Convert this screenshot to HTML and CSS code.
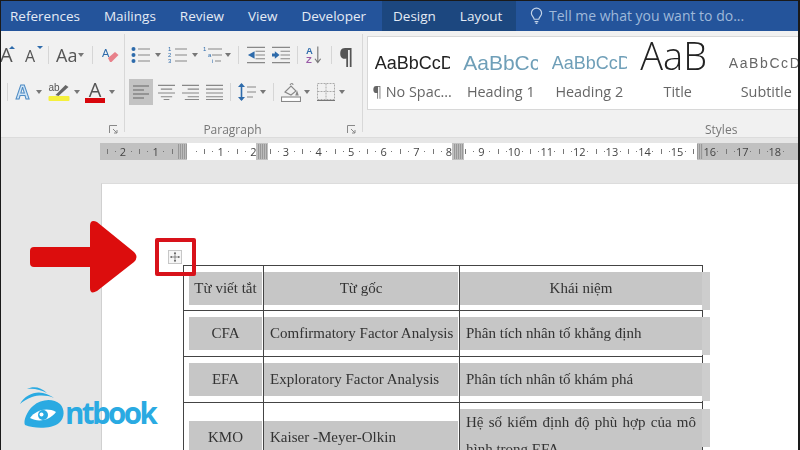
FILE: index.html
```html
<!DOCTYPE html>
<html lang="vi">
<head>
  <meta charset="UTF-8">
  <title>Word table</title>
  <link rel="stylesheet" href="styles.css">
</head>
<body>

  <nav class="tabs">
    <span class="tab">References</span>
    <span class="tab">Mailings</span>
    <span class="tab">Review</span>
    <span class="tab">View</span>
    <span class="tab">Developer</span>
    <div class="context-tabs">
      <span class="tab">Design</span>
      <span class="tab">Layout</span>
    </div>
    <div class="tell-me">
      <svg width="13" height="18" viewBox="0 0 14 18" fill="none" stroke="#c3d3e8" stroke-width="1.3"><path d="M4.500 12.500C4 10 1.500 9 1.500 6a5.500 5.500 0 0 1 11 0c0 3-2.500 4-3 6.500zM5 15h4M6 17h2"/></svg>
      <span>Tell me what you want to do...</span>
    </div>
  </nav>

  <section class="ribbon">
    <div class="group font-group">
      <div class="tool-row row-top">
        <span class="big-a cut">A<i class="up"></i></span>
        <span class="big-a small">A<i class="down"></i></span>
        <span class="sep f-sep1"></span>
        <span class="case">Aa</span><span class="caret f-caret1"></span>
        <span class="sep f-sep2"></span>
        <svg width="17" height="16" viewBox="0 0 17 16"><text x="0" y="10" font-size="11" fill="#2e6bab" font-family="Liberation Sans">A</text><path d="M6 11l7-6 3.500 3-7 7H8z" fill="#e8808a"/></svg>
      </div>
      <div class="tool-row row-bottom">
        <span class="sep f-sep3"></span>
        <span class="glow-a">A</span><span class="caret"></span>
        <div class="marker">
          <svg width="22" height="20" viewBox="0 0 21 20"><text x="0" y="9" font-size="10" fill="#555" font-family="Liberation Sans">ab</text><path d="M7 13l10-10 3 2-10 9z" fill="#666"/><rect y="14" width="21" height="5" rx="1" fill="#f5f03c"/></svg>
        </div>
        <span class="caret f-caret2"></span>
        <div class="font-color">A<i></i></div>
        <span class="caret f-caret2"></span>
      </div>
      <footer class="group-foot"><svg class="launcher" width="9" height="9" viewBox="0 0 9 9" fill="none" stroke="#888"><path d="M.5 8V.5H8M4 4l4 4M8 5v3H5"/></svg></footer>
    </div>

    <div class="group para-group">
      <div class="tool-row row-top">
        <svg width="19" height="18" viewBox="0 0 19 18" stroke="#888" stroke-width="1.2"><circle cx="2.500" cy="3" r="2" fill="#2e6bab" stroke="none"/><circle cx="2.500" cy="9" r="2" fill="#2e6bab" stroke="none"/><circle cx="2.500" cy="15" r="2" fill="#2e6bab" stroke="none"/><path d="M7 3h12M7 9h12M7 15h12"/></svg>
        <span class="caret p-caret1"></span>
        <svg width="19" height="18" viewBox="0 0 19 18" stroke="#888" stroke-width="1.2"><path d="M7 3h12M7 9h12M7 15h12"/><g fill="#2e6bab" stroke="none" font-size="6" font-family="Liberation Sans"><text x="0" y="5">1</text><text x="0" y="11">2</text><text x="0" y="17">3</text></g></svg>
        <span class="caret p-caret2"></span>
        <svg width="19" height="18" viewBox="0 0 19 18" stroke="#888" stroke-width="1.2"><path d="M5 3h14M9 9h10M12 15h6"/><g fill="#2e6bab" stroke="none" font-size="6" font-family="Liberation Sans"><text x="0" y="5">1</text><text x="5" y="11">a</text><text x="9" y="17">i</text></g></svg>
        <span class="caret p-caret3"></span>
        <span class="sep p-sep1"></span>
        <svg width="18" height="18" viewBox="0 0 19 18" stroke="#888" stroke-width="1.2"><path d="M0 1h19M9 5h10M9 9h10M9 13h10M0 17h19"/><path d="M8 5v8L1 9z" fill="#2e6bab" stroke="none"/></svg>
        <svg class="p-indent" width="18" height="18" viewBox="0 0 19 18" stroke="#888" stroke-width="1.2"><path d="M0 1h19M9 5h10M9 9h10M9 13h10M0 17h19"/><path d="M0 7.500h3V5l5 4-5 4v-2.500H0z" fill="#2e6bab" stroke="none"/></svg>
        <span class="sep p-sep2"></span>
        <svg width="17" height="20" viewBox="0 0 18 20"><text x="0" y="9" font-size="10" font-weight="bold" fill="#2e6bab" font-family="Liberation Sans">A</text><text x="0" y="19" font-size="10" font-weight="bold" fill="#9a5ba8" font-family="Liberation Sans">Z</text><path d="M12.500 1v17M9.500 14l3 4 3-4" fill="none" stroke="#777" stroke-width="1.2"/></svg>
        <span class="sep p-sep3"></span>
        <span class="pilcrow">¶</span>
      </div>
      <div class="tool-row row-bottom">
        <span class="align-on">
          <svg width="16" height="16" viewBox="0 0 16 16" stroke="#666" stroke-width="1.200"><path d="M0 2h16M0 6h11M0 10h16M0 14h11"/></svg>
        </span>
        <svg class="p-center" width="17" height="18" viewBox="0 0 18 18" stroke="#888" stroke-width="1.200"><path d="M0 2h18M3 6h12M0 10h18M3 14h12M6 17h6"/></svg>
        <svg class="p-align" width="17" height="18" viewBox="0 0 18 18" stroke="#888" stroke-width="1.200"><path d="M0 2h18M6 6h12M0 10h18M6 14h12M3 17h15"/></svg>
        <svg class="p-align" width="17" height="18" viewBox="0 0 18 18" stroke="#888" stroke-width="1.200"><path d="M0 2h18M0 6h18M0 10h18M0 14h18M0 17h18"/></svg>
        <span class="sep p-sep4"></span>
        <svg width="18" height="20" viewBox="0 0 18 20"><path d="M3.500 2v16" stroke="#2e6bab" stroke-width="1.600"/><path d="M0 5l3.500-4L7 5zM0 15l3.500 4L7 15z" fill="#2e6bab"/><path d="M9 5h9M9 10h9M9 15h6" stroke="#888" stroke-width="1.200"/></svg>
        <span class="caret p-caret4"></span>
        <span class="sep p-sep5"></span>
        <svg width="20" height="20" viewBox="0 0 20 20" fill="none" stroke="#888" stroke-width="1.100"><path d="M4 10l6-6 5 5-5 4z"/><path d="M9 3c1-2 3-2 3 0"/><path d="M16 10l1 3-2 0z" fill="#888"/><rect x=".5" y="15" width="19" height="4.500" fill="#fff"/></svg>
        <span class="caret p-caret5"></span>
        <svg class="p-borders" width="18" height="18" viewBox="0 0 18 18" fill="none" stroke="#aaa" stroke-dasharray="2 1"><path d="M.5.500h17v16H.5zM9 .5v16M.5 8.500h17"/><path d="M0 17.500h18" stroke="#777" stroke-dasharray="none"/></svg>
        <span class="caret p-caret4"></span>
      </div>
      <footer class="group-foot">
        <span class="group-name para-name">Paragraph</span>
        <svg class="launcher" width="9" height="9" viewBox="0 0 9 9" fill="none" stroke="#888"><path d="M.5 8V.5H8M4 4l4 4M8 5v3H5"/></svg>
      </footer>
    </div>

    <div class="group styles-group">
      <div class="gallery">
        <div class="style-item">
          <span class="sample nospace">AaBbCcD</span>
          <span class="style-name">¶ No Spac...</span>
        </div>
        <div class="style-item">
          <span class="sample h1">AaBbCcD</span>
          <span class="style-name">Heading 1</span>
        </div>
        <div class="style-item">
          <span class="sample h2">AaBbCcD</span>
          <span class="style-name">Heading 2</span>
        </div>
        <div class="style-item">
          <span class="sample title">AaB</span>
          <span class="style-name">Title</span>
        </div>
        <div class="style-item">
          <span class="sample subtitle">AaBbCcD</span>
          <span class="style-name">Subtitle</span>
        </div>
      </div>
      <footer class="group-foot"><span class="group-name styles-name">Styles</span></footer>
    </div>
  </section>

  <div class="ruler-bar">
    <div class="ruler">
      <span class="unit">2</span><span class="unit">1</span><span class="unit"></span><span class="unit">1</span><span class="unit">2</span><span class="unit">3</span><span class="unit">4</span><span class="unit">5</span><span class="unit">6</span><span class="unit">7</span><span class="unit">8</span><span class="unit">9</span><span class="unit">10</span><span class="unit">11</span><span class="unit">12</span><span class="unit">13</span><span class="unit">14</span><span class="unit">15</span><span class="unit">16</span><span class="unit">17</span><span class="unit">18</span>
      <i class="grip grip-a"></i>
      <i class="grip grip-b"></i>
      <i class="grip grip-c"></i>
      <i class="grip grip-d"></i>
    </div>
  </div>

  <main class="workspace">
    <div class="page">
      <table class="doc-table">
        <tr class="r-head">
          <td class="c1"><span class="shade center first">Từ viết tắt</span></td>
          <td class="c2"><span class="shade center">Từ gốc</span></td>
          <td class="c3"><span class="shade center">Khái niệm</span></td>
        </tr>
        <tr class="r-body">
          <td><span class="shade center first">CFA</span></td>
          <td><span class="shade">Comfirmatory Factor Analysis</span></td>
          <td><span class="shade">Phân tích nhân tố khẳng định</span></td>
        </tr>
        <tr class="r-body">
          <td><span class="shade center first">EFA</span></td>
          <td><span class="shade">Exploratory Factor Analysis</span></td>
          <td><span class="shade">Phân tích nhân tố khám phá</span></td>
        </tr>
        <tr class="r-long">
          <td><span class="shade center first">KMO</span></td>
          <td><span class="shade">Kaiser -Meyer-Olkin</span></td>
          <td><span class="shade tall">Hệ số kiểm định độ phù hợp của mô hình trong EFA</span></td>
        </tr>
      </table>
    </div>

    <svg class="arrow" width="110" height="74" viewBox="0 0 110 74"><path d="M5 27H61V6Q61-1 68 2L105 32Q110 37 105 42L68 71Q61 75 61 68V47H5Q1 47 1 43V31Q1 27 5 27z" fill="#dc0d0d"/></svg>
    <div class="move-box">
      <svg width="14" height="14" viewBox="0 0 15 15" fill="none"><rect x=".5" y=".5" width="14" height="14" fill="#f6f6f6" stroke="#c4c4c4"/><path d="M7.500 3v9M3 7.500h9" stroke="#666" stroke-width=".8"/><path d="M6.300 4l1.200-2L8.700 4zM6.300 11l1.200 2L8.700 11zM4 6.300L2 7.500 4 8.700zM11 6.300l2 1.200L11 8.700z" fill="#444"/></svg>
    </div>
    <div class="logo">
      <svg width="48" height="46" viewBox="0 0 48 46"><path d="M1 19C6 10 16 6 24 8 29 9 32 11 35 13 28 10 20 10 13 12 8 14 4 16 1 19zM8 4C14 1 22 2 28 8 22 5 15 3 8 4z" fill="#2aaae2"/><path d="M6 40C4 36 8 26 14 21 22 14 34 13 41 19 46 24 46 33 40 38 32 44 16 44 6 40z" fill="#2aaae2"/><path d="M11 33C17 25 28 22 37 27 31 35 20 38 11 33z" fill="#fff"/><circle cx="24" cy="30" r="5" fill="#2aaae2"/><circle cx="22.500" cy="29.500" r="2" fill="#fff"/></svg>
      <span>ntbook</span>
    </div>
  </main>

</body>
</html>
```

FILE: styles.css
```css
* {
  box-sizing: border-box;
}

html, body {
  margin: 0;
  height: 450px;
  overflow: hidden;
}

body {
  position: relative;
  font-family: "Open Sans", "Liberation Sans", sans-serif;
  background: #e6e6e6;
  width: 800px;
}

/* dark edge of the photo */
body::after {
  content: "";
  position: absolute;
  inset: 0;
  border: solid #1a1a1a;
  border-width: 1px 2px 0 1px;
  pointer-events: none;
}

/* tabs */
.tabs {
  display: flex;
  align-items: center;
  height: 31px;
  padding-left: 10px;
  background: #24549b;
  color: #e4ebf5;
  font-size: 13.5px;
}

.tab {
  margin-right: 24px;
}

.context-tabs {
  display: flex;
  align-items: center;
  flex: none;
  height: 100%;
  background: #1c477f;
  margin-left: -8px;
  padding: 0 0 0 11px;
  width: 134px;
}

.tell-me {
  display: flex;
  align-items: center;
  gap: 6px;
  margin-left: 14px;
  font-size: 14px;
  color: #9fb9da;
}

/* ribbon */
.ribbon {
  display: flex;
  height: 107px;
  background: #f1f1f1;
  border-bottom: 1px solid #dcdcdc;
  color: #555;
  filter: blur(.3px);
}

.group {
  position: relative;
  display: flex;
  flex-direction: column;
  flex: none;
  border-right: 1px solid #d8d8d8;
  margin: 3px 0 5px;
}

.font-group {
  width: 125px;
}

.para-group {
  width: 238px;
  padding-left: 6px;
}

.styles-group {
  flex: 1;
  min-width: 0;
  border-right: none;
  margin-top: 5px;
}

.tool-row {
  display: flex;
  align-items: center;
  height: 24px;
}

.row-top {
  margin-top: 9px;
}

.row-bottom {
  margin-top: 13px;
}

.group-foot {
  position: absolute;
  left: 0;
  right: 0;
  bottom: -6px;
  height: 16px;
  text-align: center;
}

.group-name {
  font-size: 12px;
  color: #777;
  line-height: 16px;
}

.para-name {
  display: block;
  padding-right: 22px;
}

.launcher {
  position: absolute;
  right: 6px;
  top: 3px;
}

.sep {
  width: 1px;
  height: 18px;
  background: #d6d6d6;
}

.caret {
  width: 0;
  height: 0;
  border: 3px solid transparent;
  border-top: 4px solid #777;
  border-bottom: 0;
}

/* font group */
.big-a {
  position: relative;
  display: block;
  font-size: 20px;
  line-height: 24px;
  color: #555;
}

.big-a.cut {
  width: 13px;
}

.big-a.small {
  width: 12px;
  margin-left: 12px;
  padding-top: 2px;
  font-size: 16px;
}

.big-a i {
  position: absolute;
  right: -2px;
  top: 3px;
  border: 3px solid transparent;
}

.big-a .up {
  border-bottom: 3px solid #2e6bab;
  border-top: 0;
}

.big-a .down {
  right: -6px;
  top: 4px;
  border-top: 3px solid #2e6bab;
  border-bottom: 0;
}

.f-sep1 {
  margin: 0 7px 0 11px;
}

.f-caret1 {
  margin-left: 1px;
}

.f-sep2 {
  margin: 0 9px 0 8px;
}

.f-sep3 {
  margin: 0 8px 0 7px;
}

.case {
  font-size: 18px;
}

.glow-a {
  width: 16px;
  margin-right: 4px;
  font-size: 19px;
  font-weight: 700;
  color: #cfe4f6;
  -webkit-text-stroke: 1px #4f8cc4;
}

.marker {
  height: 20px;
  margin-left: 6px;
}

.f-caret2 {
  margin-left: 4px;
}

.font-color {
  position: relative;
  width: 20px;
  height: 24px;
  margin-left: 5px;
  font-size: 20px;
  line-height: 20px;
  text-align: center;
}

.font-color i {
  position: absolute;
  left: 0;
  right: 0;
  bottom: 1px;
  height: 5px;
  background: #d8060c;
}

/* paragraph group */
.p-caret1 {
  margin: 0 7px 0 5px;
}

.p-caret2 {
  margin: 0 5px 0 5px;
}

.p-caret3 {
  margin: 0 7px 0 3px;
}

.p-caret4 {
  margin-left: 4px;
}

.p-caret5 {
  margin-left: 3px;
}

.p-sep1 {
  margin-right: 8px;
}

.p-indent {
  margin-left: 7px;
}

.p-sep2 {
  margin: 0 8px 0 7px;
}

.p-sep3 {
  margin: 0 7px 0 8px;
}

.p-sep4 {
  margin: 0 7px;
}

.p-sep5 {
  margin: 0 7px;
}

.pilcrow {
  font-size: 22px;
  font-weight: 700;
  line-height: 22px;
  color: #555;
}

.align-on {
  display: flex;
  align-items: center;
  justify-content: center;
  width: 24px;
  height: 26px;
  margin-left: -2px;
  background: #c3c3c3;
}

.p-center {
  margin-left: 5px;
}

.p-align {
  margin-left: 7px;
}

.p-borders {
  margin-left: 7px;
}

/* styles gallery */
.gallery {
  display: flex;
  height: 74px;
  margin-left: 4px;
  background: #fff;
  border: 1px solid #d8d8d8;
  border-right: none;
  overflow: hidden;
}

.style-item {
  display: flex;
  flex-direction: column;
  align-items: center;
  overflow: hidden;
  flex: none;
  width: 88.500px;
}

.sample {
  display: block;
  flex: none;
  width: 75px;
  height: 46px;
  padding-top: 3px;
  line-height: 46px;
  white-space: nowrap;
  font-family: "Liberation Sans", sans-serif;
  overflow: hidden;
}

.nospace {
  font-size: 18px;
  color: #222;
}

.h1 {
  font-size: 21px;
  color: #6f9fb8;
}

.h2 {
  font-size: 18px;
  color: #6f9fb8;
}

.title {
  padding-top: 0;
  font-family: "Open Sans", sans-serif;
  font-size: 38px;
  font-weight: 300;
  line-height: 36px;
  color: #222;
}

.subtitle {
  font-size: 14px;
  letter-spacing: 1.600px;
  color: #666;
}

.style-name {
  font-size: 14.400px;
  color: #666;
  line-height: 18px;
  white-space: nowrap;
}

.styles-name {
  position: absolute;
  left: 342px;
  top: 0;
}

/* ruler */
.ruler-bar {
  height: 32px;
  padding-top: 5px;
}

.ruler {
  position: relative;
  display: flex;
  height: 17px;
  margin-left: 100px;
  padding-left: 6.700px;
  font-size: 11px;
  line-height: 17px;
  color: #444;
  white-space: nowrap;
  overflow: hidden;
  background: linear-gradient(to right,
    #c1c1c1 87px, #fff 87px, #fff 156px,
    #c1c1c1 156px, #c1c1c1 168px, #fff 168px, #fff 352px,
    #c1c1c1 352px, #c1c1c1 364px, #fff 364px, #fff 597px,
    #c1c1c1 597px);
  filter: blur(.3px);
}

.unit {
  flex: none;
  width: 32.600px;
  text-align: center;
  background-image:
    linear-gradient(#777, #777),
    linear-gradient(#777, #777),
    linear-gradient(#777, #777);
  background-size: 1px 5px, 1px 1px, 1px 1px;
  background-position: 0 center, 8px center, 24px center;
  background-repeat: no-repeat;
}

.grip {
  position: absolute;
  top: 1px;
  bottom: 1px;
  width: 9px;
  background: repeating-linear-gradient(to right, #999 0 1px, #bbb 1px 2px);
}

.grip-a { left: 78px; }
.grip-b { left: 158px; }
.grip-c { left: 354px; }
.grip-d { left: 597px; width: 6px; }

/* document */
.workspace {
  position: relative;
  height: 280px;
  padding: 13px 0 0 101px;
}

.page {
  height: 100%;
  background: #fff;
  border-left: 1px solid #d0d0d0;
  border-top: 1px solid #dcdcdc;
  padding: 81px 0 0 81px;
  overflow: hidden;
  filter: blur(.3px);
}

.doc-table {
  position: relative;
  width: 519px;
  table-layout: fixed;
  border-collapse: collapse;
  font-family: "Liberation Serif", serif;
  font-size: 15px;
  color: #333;
}

.doc-table td {
  border: 1px solid #444;
  padding: 0;
  vertical-align: top;
}

.c1 { width: 80px; }
.c2 { width: 196px; }
.c3 { width: 243px; }

.shade {
  display: block;
  height: 33px;
  margin-top: 6px;
  padding-left: 6px;
  background: #c6c6c6;
  line-height: 33px;
  white-space: nowrap;
}

.shade.center {
  padding-left: 0;
  text-align: center;
}

.shade.first {
  margin-left: 5px;
  margin-right: 1px;
}

.doc-table td:nth-child(2) .shade {
  margin-right: 1px;
}

.doc-table td:last-child {
  position: relative;
}

/* the shading runs past the table's right border */
.doc-table td:last-child::after {
  content: "";
  position: absolute;
  left: 100%;
  top: 6px;
  width: 8px;
  height: 38px;
  background: #cdcdcd;
}

.r-head td {
  height: 45px;
}

.r-body td {
  height: 46px;
}

.r-long td {
  height: 70px;
}

.r-long td .shade {
  margin-top: 18px;
}

.r-long td .tall {
  height: auto;
  margin-top: 6px;
  padding-right: 6px;
  line-height: 27px;
  white-space: normal;
  text-align: justify;
}

.arrow {
  position: absolute;
  left: 29px;
  top: 50px;
}

.move-box {
  position: absolute;
  left: 155px;
  top: 68px;
  width: 41px;
  height: 38px;
  border: 4px solid #d8121a;
  border-radius: 2px;
  padding: 8px 0 0 9px;
}

.move-box svg {
  display: block;
}

.logo {
  position: absolute;
  left: 19px;
  top: 215px;
  display: flex;
  align-items: flex-start;
  font-family: "Open Sans", sans-serif;
  font-weight: 700;
  font-size: 29.500px;
  line-height: 46px;
  letter-spacing: -2.600px;
  color: #2aaae2;
}

.logo span {
  margin: 5px 0 0 -2px;
}
```
